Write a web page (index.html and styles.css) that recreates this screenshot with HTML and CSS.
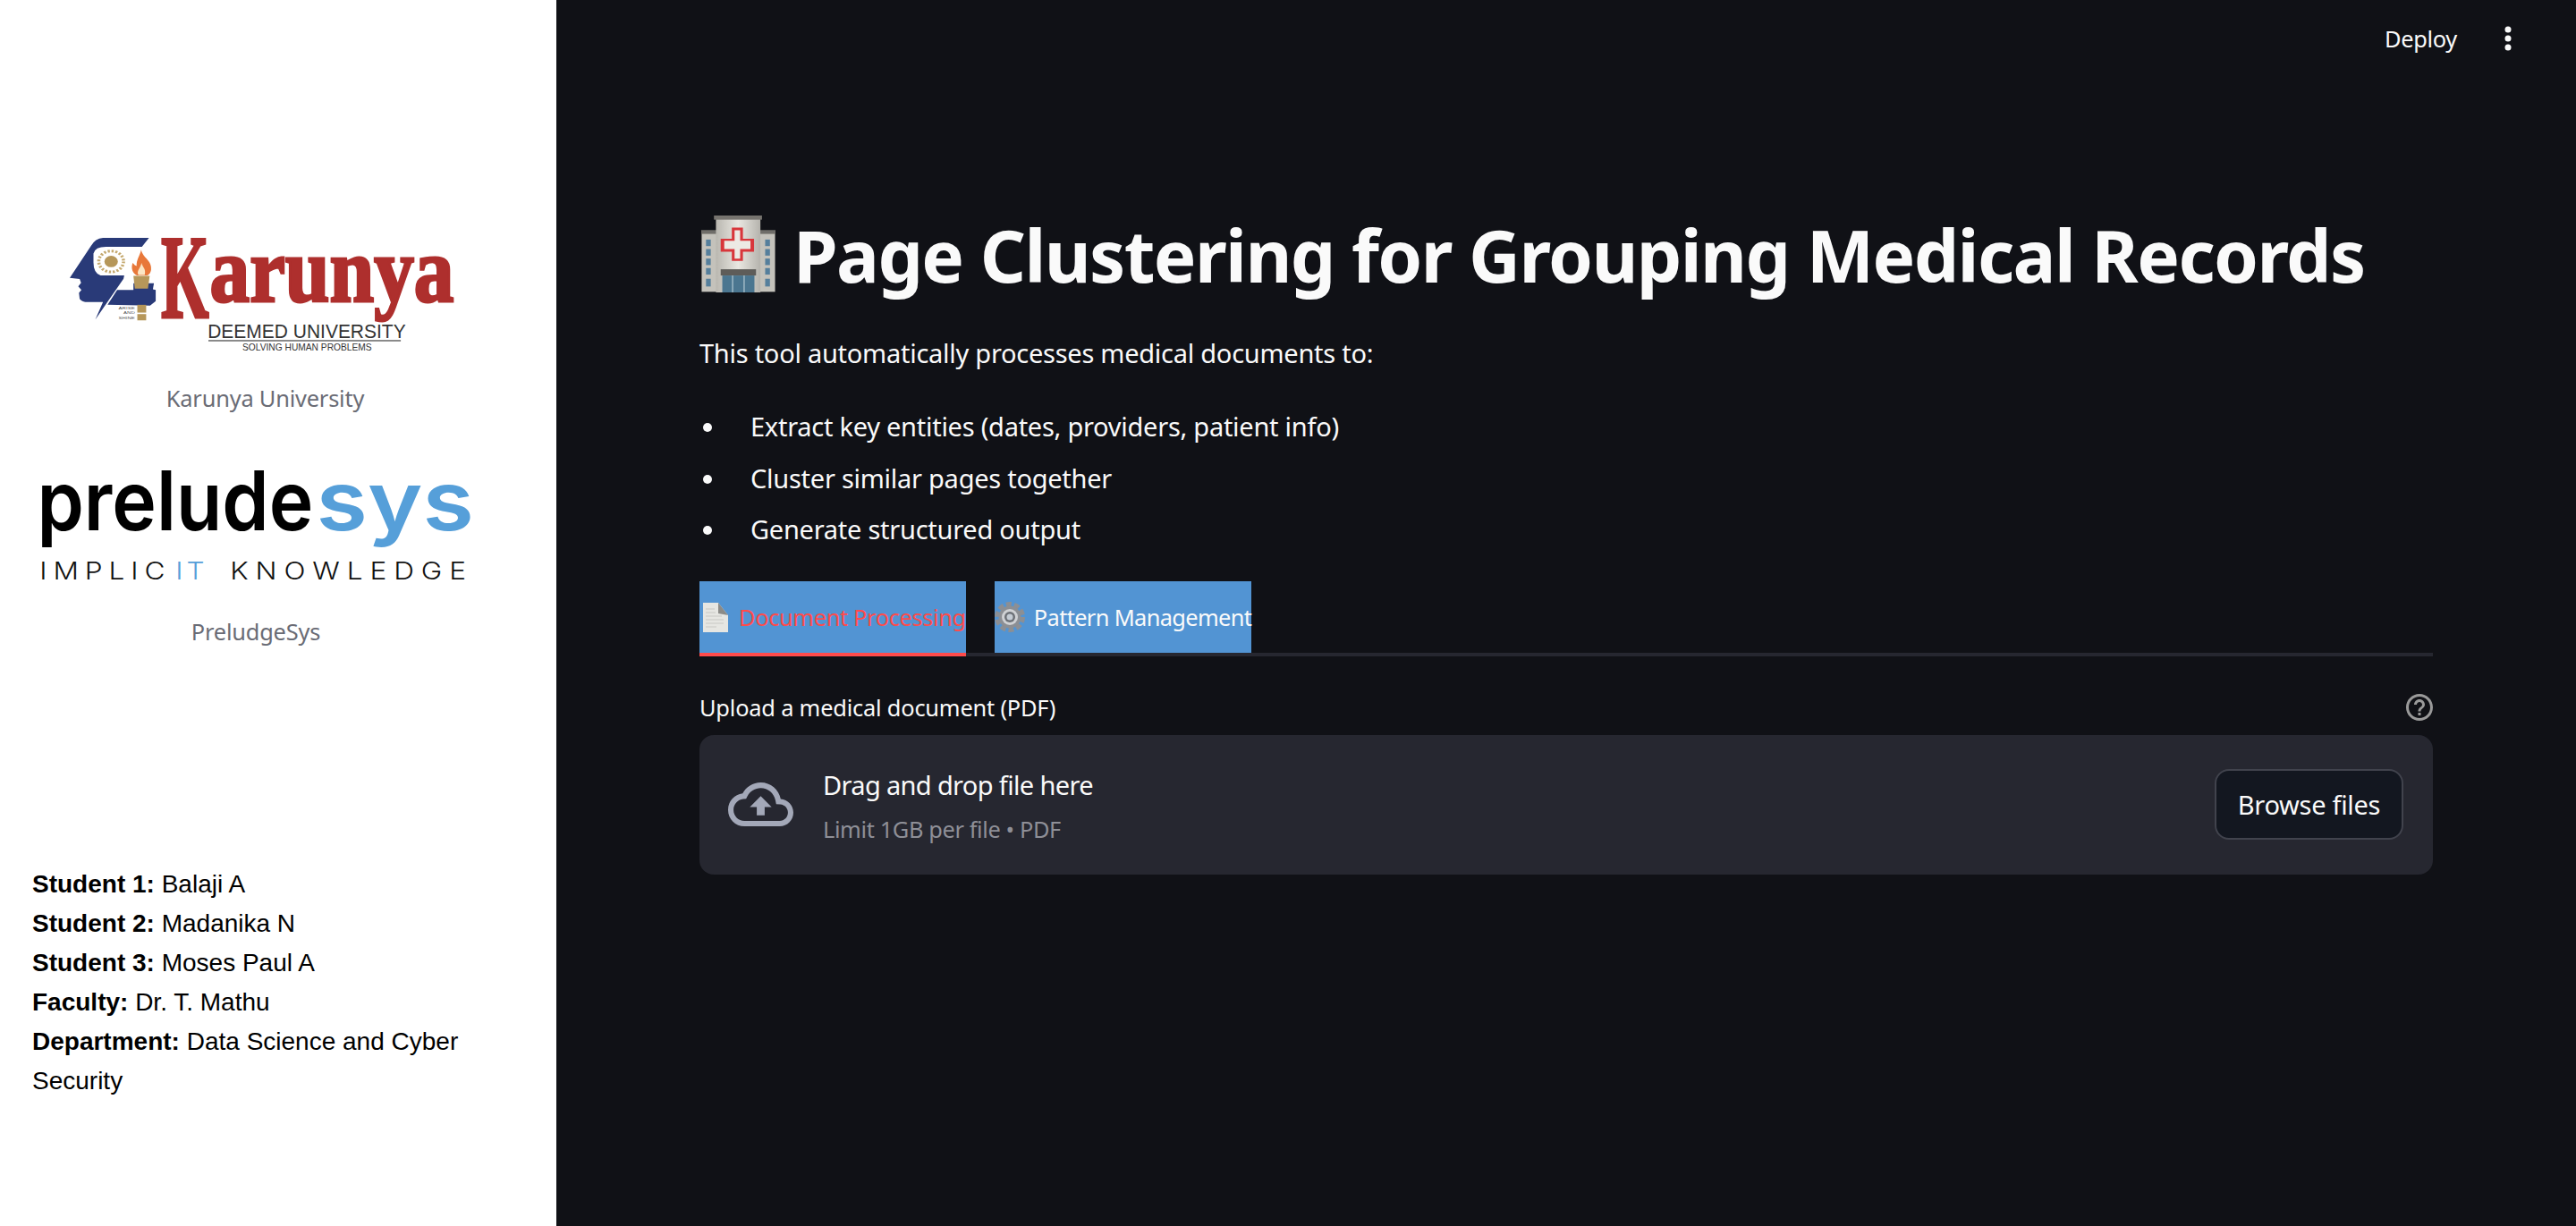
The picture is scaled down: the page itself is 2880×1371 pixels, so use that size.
FILE: index.html
```html
<!DOCTYPE html>
<html lang="en">
<head>
    <meta charset="UTF-8">
    <title>Page Clustering for Grouping Medical Records</title>
    <link rel="stylesheet" href="styles.css">
</head>
<body>
    <aside class="sidebar">
        <div class="brand brand-karunya">
            <svg class="logo-karunya" viewBox="198 135 1090 383" width="431" height="128" preserveAspectRatio="none">
                <path class="k-blue" d="M422 138L292 138Q270 140 258 165L198 272L226 276L230 288L222 300L231 312L224 322L226 342Q232 353 250 353L292 353L270 412L350 275L352 264L285 264Q265 255 265 220L265 190Q270 168 300 168L402 168Z"/>
                <path class="k-blue" d="M305 362L332 312L378 312L378 290L436 290L433 310L441 312L441 350L425 365Z"/>
                <circle class="k-gear-dot" cx="315" cy="217" r="19"/>
                <circle class="k-gear-ring" cx="315" cy="217" r="35"/>
                <path class="k-flame" d="M400 178C404 205 432 215 428 245C426 258 420 264 414 264L388 264C376 258 370 240 376 222C380 228 384 232 387 232C386 212 396 198 400 178Z"/>
                <path class="k-white" d="M401 222C404 238 414 240 410 262L392 262C386 248 398 240 401 222Z"/>
                <path class="k-gold" d="M378 265L424 265L419 308L382 308Z"/>
                <rect class="k-gold" x="389" y="362" width="25" height="26"/>
                <rect class="k-gold" x="389" y="393" width="25" height="21"/>
                <text class="k-tiny" x="336" y="376" textLength="46" lengthAdjust="spacingAndGlyphs">ARISE</text>
                <text class="k-tiny" x="350" y="393" textLength="32" lengthAdjust="spacingAndGlyphs">AND</text>
                <text class="k-tiny" x="336" y="410" textLength="46" lengthAdjust="spacingAndGlyphs">SHINE</text>
                <text class="k-name" x="456" y="404" font-size="400" textLength="136" lengthAdjust="spacingAndGlyphs">K</text>
                <text class="k-name" x="594" y="350" font-size="310" textLength="690" lengthAdjust="spacingAndGlyphs">arunya</text>
                <text class="k-sub" x="588" y="473" font-size="68" textLength="560" lengthAdjust="spacingAndGlyphs">DEEMED UNIVERSITY</text>
                <rect class="k-rule" x="590" y="480" width="544" height="4"/>
                <text class="k-sub" x="686" y="514" font-size="34" textLength="366" lengthAdjust="spacingAndGlyphs">SOLVING HUMAN PROBLEMS</text>
            </svg>
            <p class="brand-caption">Karunya University</p>
        </div>
        <div class="brand brand-prelude">
            <svg class="logo-prelude" viewBox="110 910 1230 380" width="486" height="127" preserveAspectRatio="none">
                <text class="p-name" x="106" y="1120" font-size="276" textLength="782" lengthAdjust="spacingAndGlyphs">prelude</text>
                <text class="p-sys" x="896" y="1120" font-size="276" textLength="446" lengthAdjust="spacingAndGlyphs">sys</text>
                <text class="p-tag" x="113" y="1285" font-size="80" textLength="355" lengthAdjust="spacing">IMPLIC</text>
                <text class="p-tag p-tag-blue" x="498" y="1285" font-size="80" textLength="82" lengthAdjust="spacing">IT</text>
                <text class="p-tag" x="652" y="1285" font-size="80" textLength="668" lengthAdjust="spacing">KNOWLEDGE</text>
            </svg>
            <p class="brand-caption">PreludgeSys</p>
        </div>
        <div class="credits">
            <p><b>Student 1:</b> Balaji A</p>
            <p><b>Student 2:</b> Madanika N</p>
            <p><b>Student 3:</b> Moses Paul A</p>
            <p><b>Faculty:</b> Dr. T. Mathu</p>
            <p><b>Department:</b> Data Science and Cyber Security</p>
        </div>
    </aside>

    <main class="main">
        <header class="topbar">
            <span class="deploy">Deploy</span>
            <svg class="menu-dots" viewBox="0 0 8 28" width="8" height="28">
                <circle cx="4" cy="4" r="3.5"/>
                <circle cx="4" cy="14" r="3.5"/>
                <circle cx="4" cy="24" r="3.5"/>
            </svg>
        </header>

        <section class="content">
            <h1 class="title">
                <svg class="hospital" viewBox="55 63 187 259" width="83" height="86" preserveAspectRatio="none">
                    <defs>
                        <linearGradient id="wall" x1="0" y1="0" x2="1" y2="0">
                            <stop offset="0" stop-color="#b9b7b0"/>
                            <stop offset="0.5" stop-color="#e9e7e1"/>
                            <stop offset="1" stop-color="#b5b3ad"/>
                        </linearGradient>
                    </defs>
                    <rect x="56" y="118" width="185" height="202" fill="#c4c2bb"/>
                    <rect x="55" y="112" width="187" height="13" fill="#6f6d69"/>
                    <rect x="92" y="75" width="112" height="247" fill="url(#wall)"/>
                    <rect x="87" y="63" width="121" height="14" fill="#77746f"/>
                    <path d="M132 104h28v37h28v44h-28v31h-28v-31h-28v-44h28z" fill="#d8363b"/>
                    <path d="M139 113h14v35h26v28h-26v32h-14v-32h-26v-28h26z" fill="#eceae5"/>
                    <g fill="#557f9c">
                        <rect x="67" y="144" width="12" height="22"/><rect x="67" y="176" width="12" height="22"/><rect x="67" y="208" width="12" height="22"/><rect x="67" y="240" width="12" height="22"/><rect x="67" y="276" width="12" height="26"/>
                        <rect x="216" y="144" width="12" height="22"/><rect x="216" y="176" width="12" height="22"/><rect x="216" y="208" width="12" height="22"/><rect x="216" y="240" width="12" height="22"/><rect x="216" y="276" width="12" height="26"/>
                    </g>
                    <rect x="104" y="244" width="89" height="21" fill="#5e5c59"/>
                    <rect x="108" y="265" width="81" height="57" fill="#4b7690"/>
                    <path d="M134 265v57M163 265v57" stroke="#a9c0cc" stroke-width="3"/>
                </svg>
                <span>Page Clustering for Grouping Medical Records</span>
            </h1>
            <p class="intro">This tool automatically processes medical documents to:</p>
            <ul class="features">
                <li>Extract key entities (dates, providers, patient info)</li>
                <li>Cluster similar pages together</li>
                <li>Generate structured output</li>
            </ul>

            <nav class="tabs">
                <div class="tab tab-active">
                    <svg class="tab-icon" viewBox="-3 0 34 34" width="34" height="34">
                        <path d="M1 1h17l11 14v19H1z" fill="#e6e6e2"/>
                        <path d="M18 1l11 14-11-2z" fill="#8b8b88"/>
                        <path d="M4 8h10M4 12h11M4 16h18M4 20h20M4 24h20M4 28h12" stroke="#c8c8c4" stroke-width="1.2"/>
                    </svg>
                    <span>Document Processing</span>
                </div>
                <div class="tab tab-pattern">
                    <svg class="tab-icon" viewBox="0 0 34 34" width="34" height="34">
                        <circle cx="17" cy="17" r="14.5" fill="none" stroke="#8c8f94" stroke-width="5" stroke-dasharray="6 3.1"/>
                        <circle cx="17" cy="17" r="12.5" fill="#8c8f94"/>
                        <circle cx="17" cy="17" r="9" fill="#cfd1d4"/>
                        <circle cx="17" cy="17" r="6" fill="#6c7076"/>
                        <circle cx="17" cy="17" r="3.5" fill="#c5ccd4"/>
                    </svg>
                    <span>Pattern Management</span>
                </div>
            </nav>

            <div class="upload-label">
                <span>Upload a medical document (PDF)</span>
                <svg class="help-icon" viewBox="2 2 20 20" width="30" height="30">
                    <path d="M11 18h2v-2h-2v2zm1-16C6.48 2 2 6.48 2 12s4.48 10 10 10 10-4.48 10-10S17.52 2 12 2zm0 18c-4.41 0-8-3.59-8-8s3.59-8 8-8 8 3.59 8 8-3.59 8-8 8zm0-14c-2.21 0-4 1.79-4 4h2c0-1.1.9-2 2-2s2 .9 2 2c0 2-3 1.75-3 5h2c0-2.25 3-2.5 3-5 0-2.21-1.79-4-4-4z"/>
                </svg>
            </div>
            <div class="dropzone">
                <svg class="cloud-icon" viewBox="0 4 24 16" width="73" height="49" preserveAspectRatio="none">
                    <path d="M19.35 10.04C18.67 6.59 15.64 4 12 4 9.11 4 6.6 5.64 5.35 8.04 2.34 8.36 0 10.91 0 14c0 3.31 2.69 6 6 6h13c2.76 0 5-2.24 5-5 0-2.64-2.05-4.78-4.65-4.96zM19 18H6c-2.21 0-4-1.79-4-4 0-2.05 1.53-3.76 3.56-3.97l1.07-.11.5-.95C8.08 7.14 9.94 6 12 6c2.62 0 4.88 1.86 5.39 4.43l.3 1.5 1.53.11c1.56.1 2.78 1.41 2.78 2.96 0 1.65-1.35 3-3 3zM8 13h2.55v3h2.9v-3H16l-4-4z"/>
                </svg>
                <div class="drop-text">
                    <div class="drop-title">Drag and drop file here</div>
                    <div class="drop-limit">Limit 1GB per file • PDF</div>
                </div>
                <button class="browse-btn">Browse files</button>
            </div>
        </section>
    </main>
</body>
</html>
```
FILE: styles.css
```css
* {
    box-sizing: border-box;
}

body {
    display: flex;
    height: 100vh;
    margin: 0;
    overflow: hidden;
    background-color: #101116;
    color: #fafafa;
    font-family: "Noto Sans", sans-serif;
}

p {
    margin: 0;
}

/* sidebar */
.sidebar {
    flex: 0 0 622px;
    padding-top: 265px;
    background-color: #fff;
    color: #000;
}

.sidebar svg {
    display: block;
    overflow: visible;
}

.brand-karunya {
    width: 431px;
    margin-left: 78px;
}

.brand-prelude {
    width: 486px;
    margin-top: 58px;
    margin-left: 43px;
}

.brand-caption {
    height: 40px;
    margin-top: 32px;
    color: #6a6c75;
    font-size: 25.4px;
    letter-spacing: -0.2px;
    line-height: 40px;
    text-align: center;
}

.brand-karunya .brand-caption {
    padding-left: 6px;
}

.brand-prelude .brand-caption {
    margin-top: 36px;
}

.credits {
    width: 530px;
    margin-top: 241px;
    padding-left: 36px;
    font-family: "Liberation Sans", Arial, sans-serif;
    font-size: 28px;
    line-height: 44px;
}

/* logos */
.k-blue { fill: #293a78; }
.k-gold { fill: #b6975a; }
.k-white { fill: #fbe6c4; }
.k-flame { fill: #e8783a; }
.k-rule { fill: #555; }
.k-gear-dot { fill: #b6975a; }

.k-gear-ring {
    fill: none;
    stroke: #c4a86e;
    stroke-width: 9;
    stroke-dasharray: 6 5;
}

.k-tiny {
    fill: #555;
    font-family: "Liberation Sans", sans-serif;
    font-size: 13px;
}

.k-name {
    fill: #ae2f2d;
    stroke: #ae2f2d;
    stroke-width: 9;
    font-family: "Liberation Serif", serif;
    font-weight: 700;
}

.k-sub {
    fill: #333;
    font-family: "Liberation Sans", sans-serif;
}

.p-name {
    fill: #000;
    font-family: Inter, sans-serif;
    font-weight: 600;
}

.p-sys {
    fill: #569fd9;
    font-family: Inter, sans-serif;
    font-weight: 600;
}

.p-tag {
    fill: #111;
    font-family: Inter, sans-serif;
    font-weight: 300;
}

.p-tag-blue {
    fill: #569fd9;
}

/* main area */
.main {
    flex: 1;
    min-width: 0;
}

.topbar {
    display: flex;
    align-items: center;
    justify-content: flex-end;
    gap: 53px;
    height: 86px;
    padding-right: 72px;
}

.deploy {
    font-size: 25.4px;
    letter-spacing: -0.3px;
}

.menu-dots {
    fill: #fafafa;
}

.content {
    padding: 0 160px 0 160px;
}

.title {
    display: flex;
    align-items: center;
    gap: 20px;
    height: 86px;
    margin: 155px 0 0;
    padding-left: 2px;
    font-size: 80px;
    font-weight: 700;
    letter-spacing: -1.6px;
    white-space: nowrap;
}

.intro {
    height: 40px;
    margin-top: 48px;
    font-size: 29px;
    letter-spacing: -0.26px;
    line-height: 40px;
}

.features {
    margin: 33px 0 0;
    padding: 0;
    list-style: none;
    font-size: 29px;
    letter-spacing: -0.26px;
}

.features li {
    position: relative;
    height: 57.5px;
    padding-left: 57px;
    line-height: 57.5px;
}

.features li::before {
    content: "";
    position: absolute;
    top: 25px;
    left: 4px;
    width: 10px;
    height: 10px;
    border-radius: 50%;
    background-color: #fafafa;
}

.tabs {
    display: flex;
    gap: 32px;
    height: 84px;
    margin-top: 29px;
    border-bottom: 4px solid #262730;
}

.tab {
    display: flex;
    align-items: center;
    gap: 10px;
    height: 80px;
    background-color: #5294d3;
    font-size: 25.4px;
    letter-spacing: -0.36px;
    white-space: nowrap;
}

.tab-pattern {
    letter-spacing: -0.65px;
}

.tab-active {
    height: 84px;
    border-bottom: 4px solid #ff4b4b;
    color: #ff4b4b;
}

.upload-label {
    display: flex;
    align-items: center;
    justify-content: space-between;
    height: 40px;
    margin-top: 37px;
    font-size: 25.4px;
    letter-spacing: -0.2px;
}

.help-icon {
    fill: #9a9a9a;
}

.dropzone {
    display: flex;
    align-items: center;
    gap: 33px;
    height: 156px;
    margin-top: 11px;
    padding: 0 33px 0 32px;
    border-radius: 16px;
    background-color: #262730;
}

.cloud-icon {
    fill: #a3a8b8;
}

.drop-text {
    flex: 1;
    padding-top: 6px;
}

.drop-title {
    font-size: 29px;
    letter-spacing: -0.65px;
    line-height: 44px;
}

.drop-limit {
    margin-top: 5px;
    color: #8e8f97;
    font-size: 25.4px;
    letter-spacing: -0.38px;
    line-height: 44px;
}

.browse-btn {
    width: 211px;
    height: 79px;
    border: 2px solid #41434d;
    border-radius: 16px;
    background-color: #131720;
    color: #fafafa;
    font-family: "Noto Sans", sans-serif;
    font-size: 29px;
    letter-spacing: -0.3px;
}
```
